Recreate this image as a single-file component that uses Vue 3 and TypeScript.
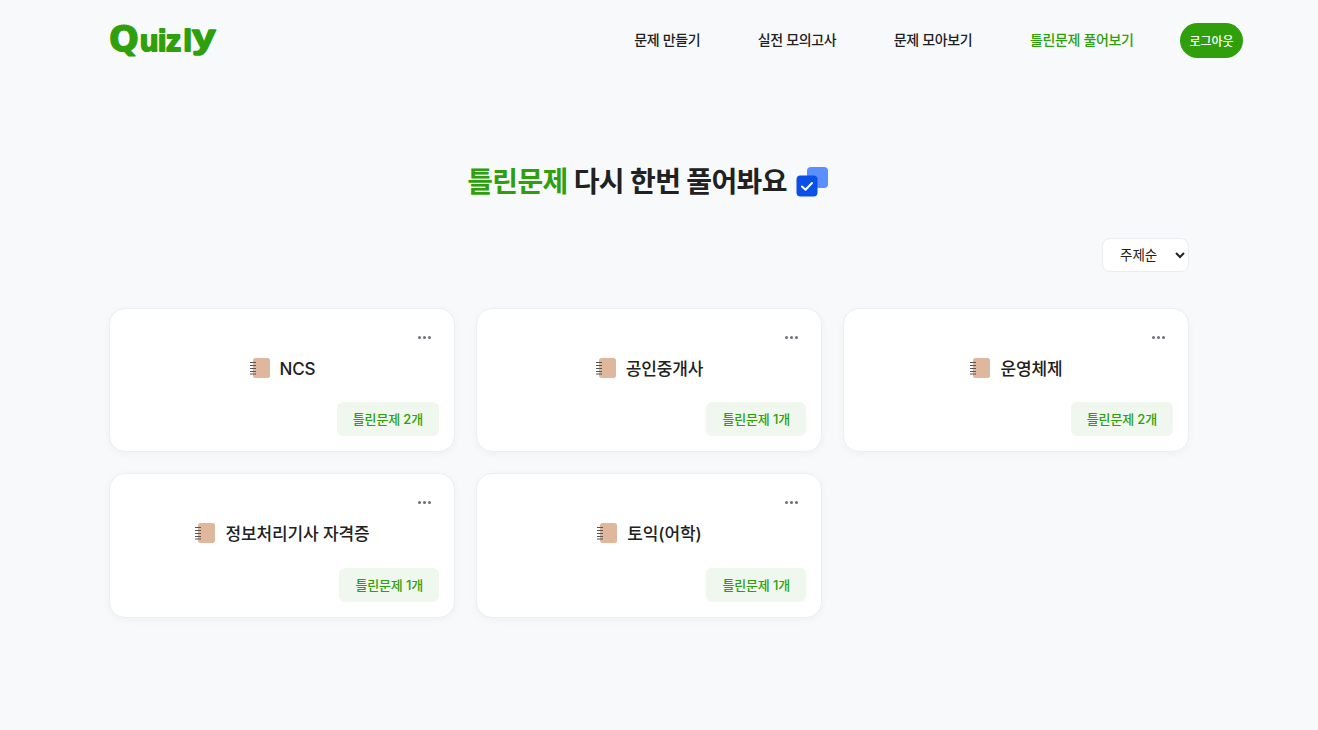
<script setup lang="ts">
interface Card { name: string; count: number }
const navItems: string[] = ['문제 만들기', '실전 모의고사', '문제 모아보기', '틀린문제 풀어보기']
const cards: Card[] = [
  { name: 'NCS', count: 2 },
  { name: '공인중개사', count: 1 },
  { name: '운영체제', count: 2 },
  { name: '정보처리기사 자격증', count: 1 },
  { name: '토익(어학)', count: 1 },
]
</script>

<template>
  <div class="page">
    <header class="header">
      <div class="logo">
        <svg width="112" height="36" viewBox="0 0 112 36">
          <text x="0" y="29" class="logo-q">Q</text>
          <text x="31 49 57 74.5" y="29" class="logo-rest">uizl</text>
          <text transform="translate(83 26) scale(1.25 1)" class="logo-y">y</text>
        </svg>
      </div>
      <nav class="nav">
        <a v-for="(item, i) in navItems" :key="item" class="nav-item" :class="{ active: i === 3 }">{{ item }}</a>
        <button class="logout">로그아웃</button>
      </nav>
    </header>
    <main class="content">
      <h1 class="title">
        <span class="green">틀린문제</span> 다시 한번 풀어봐요
        <svg class="check" width="33" height="31" viewBox="0 0 33 31">
          <rect x="11" y="0" width="21" height="21" rx="4" fill="#5b8fff" />
          <rect x="0.5" y="8.5" width="21" height="21" rx="4" fill="#0a50e6" />
          <path d="M6 19.5l3.5 3.3 6.5-6.8" fill="none" stroke="#fff" stroke-width="2" stroke-linecap="round" stroke-linejoin="round" />
        </svg>
      </h1>
      <div class="sort-row">
        <select class="sort">
          <option>주제순</option>
        </select>
      </div>
      <div class="grid">
        <article v-for="card in cards" :key="card.name" class="card">
          <div class="more"><i></i><i></i><i></i></div>
          <div class="name">
            <svg width="20" height="22" viewBox="0 0 20 22">
              <rect x="3" y="1" width="17" height="20" rx="2.5" fill="#deb79c" />
              <path d="M0 5.5h6M0 8.5h6M0 11.5h6M0 14.5h6M0 17h6" stroke="#555" stroke-width="1.2" />
            </svg>
            <span>{{ card.name }}</span>
          </div>
          <div class="foot"><span class="badge">틀린문제 {{ card.count }}개</span></div>
        </article>
      </div>
    </main>
  </div>
</template>

<style>
html, body { margin: 0; background: #f8f9fb; }
</style>

<style scoped>
.page {
  width: 1298px;
  height: 730px;
  overflow: hidden;
  font-family: Inter, "Noto Sans CJK KR", sans-serif;
  color: #212121;
}
.header {
  height: 81px;
  padding: 0 55px 0 109px;
  display: flex;
  align-items: center;
  justify-content: space-between;
  box-sizing: border-box;
}
.logo { height: 36px; margin-top: -1px; }
.logo svg { display: block; overflow: visible; }
.logo-q, .logo-rest, .logo-y {
  font-family: "Liberation Sans", sans-serif;
  font-weight: 700;
  fill: #2fa00c;
  stroke: #2fa00c;
  stroke-linejoin: round;
}
.logo-q { font-family: "DejaVu Sans", sans-serif; font-size: 35px; stroke-width: 1.2px; }
.logo-rest { font-size: 30px; stroke-width: 2px; }
.logo-y { font-size: 34px; stroke-width: 1.6px; }
.nav { display: flex; align-items: center; }
.nav-item {
  font-size: 14px;
  font-weight: 500;
  margin: 0 57.5px 4px 0;
  letter-spacing: -0.35px;
  white-space: nowrap;
}
.nav-item.active { color: #2fa00c; margin-right: 46.5px; }
.logout {
  width: 63px;
  height: 35px;
  border: 0;
  padding: 0;
  border-radius: 18px;
  background: #2fa00c;
  color: #fff;
  font: 500 12px Inter, "Noto Sans CJK KR", sans-serif;
}
.content { width: 1080px; margin: 0 auto; }
.title {
  margin: 81px 0 0;
  padding-right: 2px;
  height: 39px;
  font-size: 28px;
  line-height: 40px;
  font-weight: 700;
  letter-spacing: -0.62px;
  text-align: center;
  white-space: nowrap;
}
.green { color: #2fa00c; }
.check { vertical-align: -6px; margin-left: 3px; }
.sort-row { display: flex; justify-content: flex-end; margin-top: 37px; }
.sort {
  width: 87px;
  height: 34px;
  padding: 0 0 0 13px;
  border: 1px solid #ebedf0;
  border-radius: 8px;
  background: #fff;
  color: #212121;
  font: 400 13.5px Inter, "Noto Sans CJK KR", sans-serif;
}
.grid {
  margin-top: 36px;
  display: grid;
  grid-template-columns: repeat(3, 346px);
  gap: 21px;
}
.card {
  height: 144.4px;
  box-sizing: border-box;
  padding: 15px;
  background: #fff;
  border: 1px solid #eceef0;
  border-radius: 16px;
  box-shadow: 0 2px 8px rgba(0, 0, 0, 0.04);
  display: flex;
  flex-direction: column;
}
.more { display: flex; gap: 2px; justify-content: flex-end; height: 28px; padding: 14px 8px 0 0; box-sizing: border-box; margin-top: -2px; }
.more i { width: 3px; height: 3px; border-radius: 50%; background: #6b6f76; }
.name {
  margin-top: 6px;
  height: 26px;
  line-height: 26px;
  display: flex;
  align-items: center;
  justify-content: center;
  gap: 10px;
  font-size: 17px;
  font-weight: 500;
  letter-spacing: -0.12px;
  padding-left: 1px;
}
.name svg { margin-top: -2px; }
.foot { margin-top: auto; display: flex; justify-content: flex-end; }
.badge {
  height: 34px;
  line-height: 34px;
  padding: 0 16px;
  border-radius: 6px;
  background: #f0f7ef;
  color: #2fa00c;
  font-size: 13px;
  font-weight: 500;
  letter-spacing: -0.15px;
}
</style>
